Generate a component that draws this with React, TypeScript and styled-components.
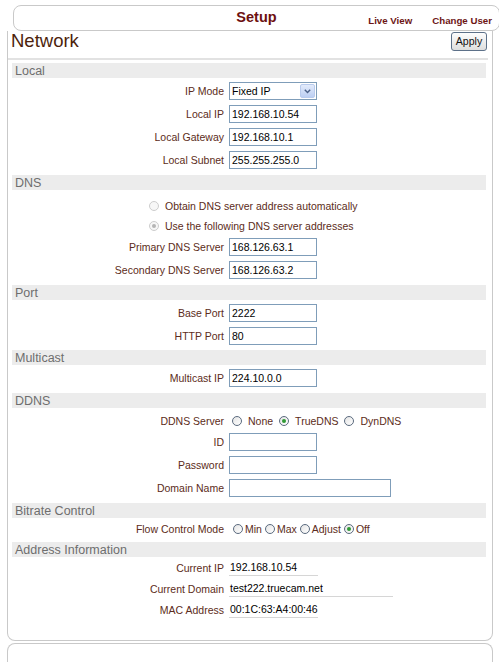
import React from "react";
import styled, { createGlobalStyle } from "styled-components";

const GlobalStyle = createGlobalStyle`
  html, body {
    margin: 0;
    padding: 0;
    background: #fff;
  }
  body {
    font-family: "Liberation Sans", Arial, sans-serif;
  }
`;

const LABEL = "#5c2c20";
const EDGE = "#c9c9c9";

const Page = styled.div`
  width: 499px;
  height: 662px;
  overflow: hidden;
  padding-top: 5px;
  box-sizing: border-box;
`;

const TopBar = styled.header`
  box-sizing: border-box;
  margin-left: 13px;
  width: 487px;
  height: 26px;
  border: 1px solid ${EDGE};
  border-radius: 8px;
  display: grid;
  grid-template-columns: 1fr auto 1fr;
  align-items: start;
`;

const PageTitle = styled.div`
  grid-column: 2;
  padding-top: 3px;
  font-size: 14.5px;
  line-height: 17px;
  font-weight: bold;
  color: #6d0f10;
`;

const NavLinks = styled.nav`
  grid-column: 3;
  display: flex;
  justify-content: flex-end;
  gap: 20px;
  padding: 9px 7px 0 0;
`;

const NavLink = styled.a`
  font-size: 9.7px;
  line-height: 12px;
  font-weight: bold;
  color: #6d1515;
  text-decoration: none;
  white-space: nowrap;
`;

const Panel = styled.main`
  box-sizing: border-box;
  margin-left: 7px;
  width: 486px;
  height: 610px;
  border: 1px solid ${EDGE};
  border-top: none;
  border-radius: 0 0 8px 8px;
  padding: 0 6px 0 4px;
`;

const NextPanel = styled.div`
  box-sizing: border-box;
  margin: 2px 0 0 7px;
  width: 486px;
  height: 40px;
  border: 1px solid ${EDGE};
  border-bottom: none;
  border-radius: 8px 8px 0 0;
`;

const TitleRow = styled.div`
  height: 20px;
  display: flex;
  align-items: center;
  justify-content: space-between;
  margin: 0 -1px;
`;

const Title = styled.h1`
  margin: 0;
  font-size: 18.5px;
  line-height: 20px;
  font-weight: normal;
  color: #4d1f0c;
`;

const ApplyButton = styled.button`
  box-sizing: border-box;
  width: 36px;
  height: 19px;
  padding: 0;
  border: 1px solid #5d7189;
  border-radius: 3px;
  background: linear-gradient(#fdfdfd, #dedede);
  font-family: "Liberation Sans", Arial, sans-serif;
  font-size: 10.6px;
  color: #111;
`;

const Divider = styled.div`
  height: 2px;
  margin: 7px -2px 0 -4px;
  background: #e2e2e2;
`;

const Section = styled.section`
  &:first-of-type {
    margin-top: 3px;
  }
`;

const SectionBar = styled.h2`
  box-sizing: border-box;
  margin: 0;
  height: 15px;
  padding: 1px 0 0 3px;
  background: #ececec;
  color: #6e6e6e;
  font-size: 12.5px;
  line-height: 15px;
  font-weight: normal;
  overflow: hidden;
`;

const SectionBody = styled.div<{ $top?: number }>`
  padding: ${(p) => p.$top ?? 1.5}px 0 3px;
`;

const Row = styled.div<{ $h?: number }>`
  display: grid;
  grid-template-columns: 212px 1fr;
  column-gap: 5px;
  align-items: center;
  height: ${(p) => p.$h ?? 23}px;
`;

const Label = styled.span`
  text-align: right;
  font-size: 10.5px;
  color: ${LABEL};
  white-space: nowrap;
`;

const TextBox = styled.input<{ $w?: number }>`
  box-sizing: border-box;
  width: ${(p) => p.$w ?? 88}px;
  height: 18px;
  margin: 0;
  padding: 0 2px;
  border: 1px solid #7f9db9;
  background: #fff;
  font-family: "Liberation Sans", Arial, sans-serif;
  font-size: 10.5px;
  color: #000;
  outline: none;
`;

const SelectBox = styled.div`
  box-sizing: border-box;
  width: 88px;
  height: 18px;
  border: 1px solid #7f9db9;
  display: flex;
  align-items: center;
  justify-content: space-between;
  padding: 0 1px 0 2px;
  font-size: 10.5px;
  color: #000;
  background: #fff;
`;

const SelectArrow = styled.span`
  box-sizing: border-box;
  width: 15px;
  height: 14px;
  border: 1px solid #b9cbed;
  border-radius: 2px;
  background: linear-gradient(#e3ebfb, #bccff3);
  display: flex;
  align-items: center;
  justify-content: center;
`;

const OptionList = styled.div`
  padding-left: 137px;
`;

const OptionRow = styled.div`
  height: 20px;
  display: flex;
  align-items: center;
  gap: 6px;
  font-size: 10.5px;
  color: ${LABEL};
  white-space: nowrap;
`;

const RadioGroup = styled.div<{ $gap: number; $lead: number }>`
  display: flex;
  align-items: center;
  gap: ${(p) => p.$gap}px;
  padding-left: ${(p) => p.$lead}px;
`;

const RadioOption = styled.span<{ $gap: number }>`
  display: inline-flex;
  align-items: center;
  gap: ${(p) => p.$gap}px;
  font-size: 10.5px;
  color: ${LABEL};
  white-space: nowrap;
`;

const RadioDot = styled.span<{ $on?: boolean; $disabled?: boolean }>`
  box-sizing: border-box;
  position: relative;
  flex: none;
  width: 10px;
  height: 10px;
  border-radius: 50%;
  border: 1px solid ${(p) => (p.$disabled ? "#cdcdcd" : "#5a6a7e")};
  background: ${(p) =>
    p.$disabled ? "#f7f7f7" : "linear-gradient(135deg, #e4e4e4, #ffffff)"};

  &::after {
    content: "";
    display: ${(p) => (p.$on ? "block" : "none")};
    position: absolute;
    inset: 2px;
    border-radius: 50%;
    background: ${(p) => (p.$disabled ? "#b5b5b5" : "#2f9a34")};
  }
`;

const InfoValue = styled.span<{ $w: number }>`
  box-sizing: border-box;
  width: ${(p) => p.$w}px;
  padding: 0 0 1px 1px;
  border-bottom: 1px solid #d6d6d6;
  font-size: 10.5px;
  line-height: 13px;
  color: #000;
  white-space: nowrap;
`;

type Opt = { label: string; on?: boolean };

const Radios = ({
  options,
  gap,
  inner,
  lead,
}: {
  options: Opt[];
  gap: number;
  inner: number;
  lead: number;
}) => (
  <RadioGroup $gap={gap} $lead={lead}>
    {options.map((o) => (
      <RadioOption key={o.label} $gap={inner}>
        <RadioDot $on={o.on} />
        {o.label}
      </RadioOption>
    ))}
  </RadioGroup>
);

const Field = ({ label, value, w }: { label: string; value: string; w?: number }) => (
  <Row>
    <Label>{label}</Label>
    <TextBox $w={w} defaultValue={value} />
  </Row>
);

const Info = ({ label, value, w }: { label: string; value: string; w: number }) => (
  <Row $h={21}>
    <Label>{label}</Label>
    <InfoValue $w={w}>{value}</InfoValue>
  </Row>
);

export default function App() {
  return (
    <Page>
      <GlobalStyle />
      <TopBar>
        <PageTitle>Setup</PageTitle>
        <NavLinks>
          <NavLink href="#">Live View</NavLink>
          <NavLink href="#">Change User</NavLink>
        </NavLinks>
      </TopBar>

      <Panel>
        <TitleRow>
          <Title>Network</Title>
          <ApplyButton>Apply</ApplyButton>
        </TitleRow>
        <Divider />

        <Section>
          <SectionBar>Local</SectionBar>
          <SectionBody>
            <Row>
              <Label>IP Mode</Label>
              <SelectBox>
                Fixed IP
                <SelectArrow>
                  <svg width="7" height="5" viewBox="0 0 7 5">
                    <path d="M0.8 0.8 L3.5 3.6 L6.2 0.8" fill="none" stroke="#4a5f86" strokeWidth="1.4" />
                  </svg>
                </SelectArrow>
              </SelectBox>
            </Row>
            <Field label="Local IP" value="192.168.10.54" />
            <Field label="Local Gateway" value="192.168.10.1" />
            <Field label="Local Subnet" value="255.255.255.0" />
          </SectionBody>
        </Section>

        <Section>
          <SectionBar>DNS</SectionBar>
          <SectionBody $top={6}>
            <OptionList>
              <OptionRow>
                <RadioDot $disabled />
                Obtain DNS server address automatically
              </OptionRow>
              <OptionRow>
                <RadioDot $disabled $on />
                Use the following DNS server addresses
              </OptionRow>
            </OptionList>
            <Field label="Primary DNS Server" value="168.126.63.1" />
            <Field label="Secondary DNS Server" value="168.126.63.2" />
          </SectionBody>
        </Section>

        <Section>
          <SectionBar>Port</SectionBar>
          <SectionBody>
            <Field label="Base Port" value="2222" />
            <Field label="HTTP Port" value="80" />
          </SectionBody>
        </Section>

        <Section>
          <SectionBar>Multicast</SectionBar>
          <SectionBody>
            <Field label="Multicast IP" value="224.10.0.0" />
          </SectionBody>
        </Section>

        <Section>
          <SectionBar>DDNS</SectionBar>
          <SectionBody $top={3}>
            <Row $h={20}>
              <Label>DDNS Server</Label>
              <Radios
                lead={3}
                gap={6}
                inner={6}
                options={[{ label: "None" }, { label: "TrueDNS", on: true }, { label: "DynDNS" }]}
              />
            </Row>
            <Field label="ID" value="" />
            <Field label="Password" value="" />
            <Field label="Domain Name" value="" w={162} />
          </SectionBody>
        </Section>

        <Section>
          <SectionBar>Bitrate Control</SectionBar>
          <SectionBody>
            <Row $h={20}>
              <Label>Flow Control Mode</Label>
              <Radios
                lead={4}
                gap={3}
                inner={2}
                options={[
                  { label: "Min" },
                  { label: "Max" },
                  { label: "Adjust" },
                  { label: "Off", on: true },
                ]}
              />
            </Row>
          </SectionBody>
        </Section>

        <Section>
          <SectionBar>Address Information</SectionBar>
          <SectionBody $top={0.5}>
            <Info label="Current IP" value="192.168.10.54" w={89} />
            <Info label="Current Domain" value="test222.truecam.net" w={164} />
            <Info label="MAC Address" value="00:1C:63:A4:00:46" w={89} />
          </SectionBody>
        </Section>
      </Panel>
      <NextPanel />
    </Page>
  );
}
